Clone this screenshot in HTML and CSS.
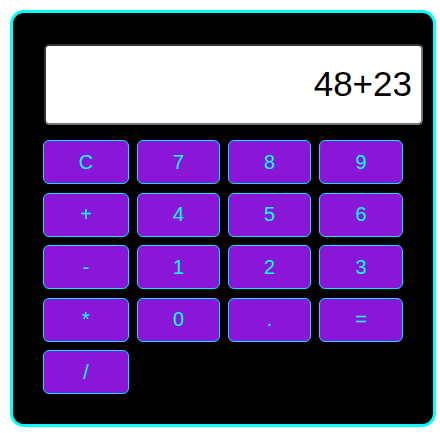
FILE: index.html
```html
<!DOCTYPE html>
<html>
<head>
<meta charset="utf-8">
<link rel="stylesheet" href="styles.css">
</head>
<body>
<div class="calc">
  <div class="display">48+23</div>
  <div class="keys">
    <button class="key">C</button>
    <button class="key">7</button>
    <button class="key">8</button>
    <button class="key">9</button>
    <button class="key">+</button>
    <button class="key">4</button>
    <button class="key">5</button>
    <button class="key">6</button>
    <button class="key">-</button>
    <button class="key">1</button>
    <button class="key">2</button>
    <button class="key">3</button>
    <button class="key">*</button>
    <button class="key">0</button>
    <button class="key">.</button>
    <button class="key">=</button>
    <button class="key">/</button>
  </div>
</div>
</body>
</html>
```

FILE: styles.css
```css
html, body {
  margin: 0;
  padding: 0;
  background: #ffffff;
}
body {
  padding: 10px;
  font-family: "Liberation Sans", Arial, sans-serif;
}
.calc {
  box-sizing: border-box;
  width: 426px;
  height: 417px;
  background: #000000;
  border: 3px solid #00ffff;
  border-radius: 14px;
  padding: 31px 10px 29px 30px;
}
.display {
  box-sizing: border-box;
  width: 379px;
  height: 81px;
  margin: 0 0 15px 1px;
  background: #ffffff;
  border: 2px solid;
  border-color: #333333 #777777 #777777 #333333;
  border-radius: 5px;
  color: #000000;
  font-size: 35px;
  text-align: right;
  padding: 0 9px;
  line-height: 75px;
}
.keys {
  display: grid;
  grid-template-columns: 86px 83px 83px 84px;
  grid-auto-rows: 44px;
  column-gap: 8px;
  row-gap: 8.5px;
}
.key {
  box-sizing: border-box;
  margin: 0;
  padding: 0;
  background: #8a16d8;
  border: 1px solid #00e5ff;
  border-radius: 6px;
  color: #00ffff;
  font-family: "Liberation Sans", Arial, sans-serif;
  font-size: 20px;
}
```
